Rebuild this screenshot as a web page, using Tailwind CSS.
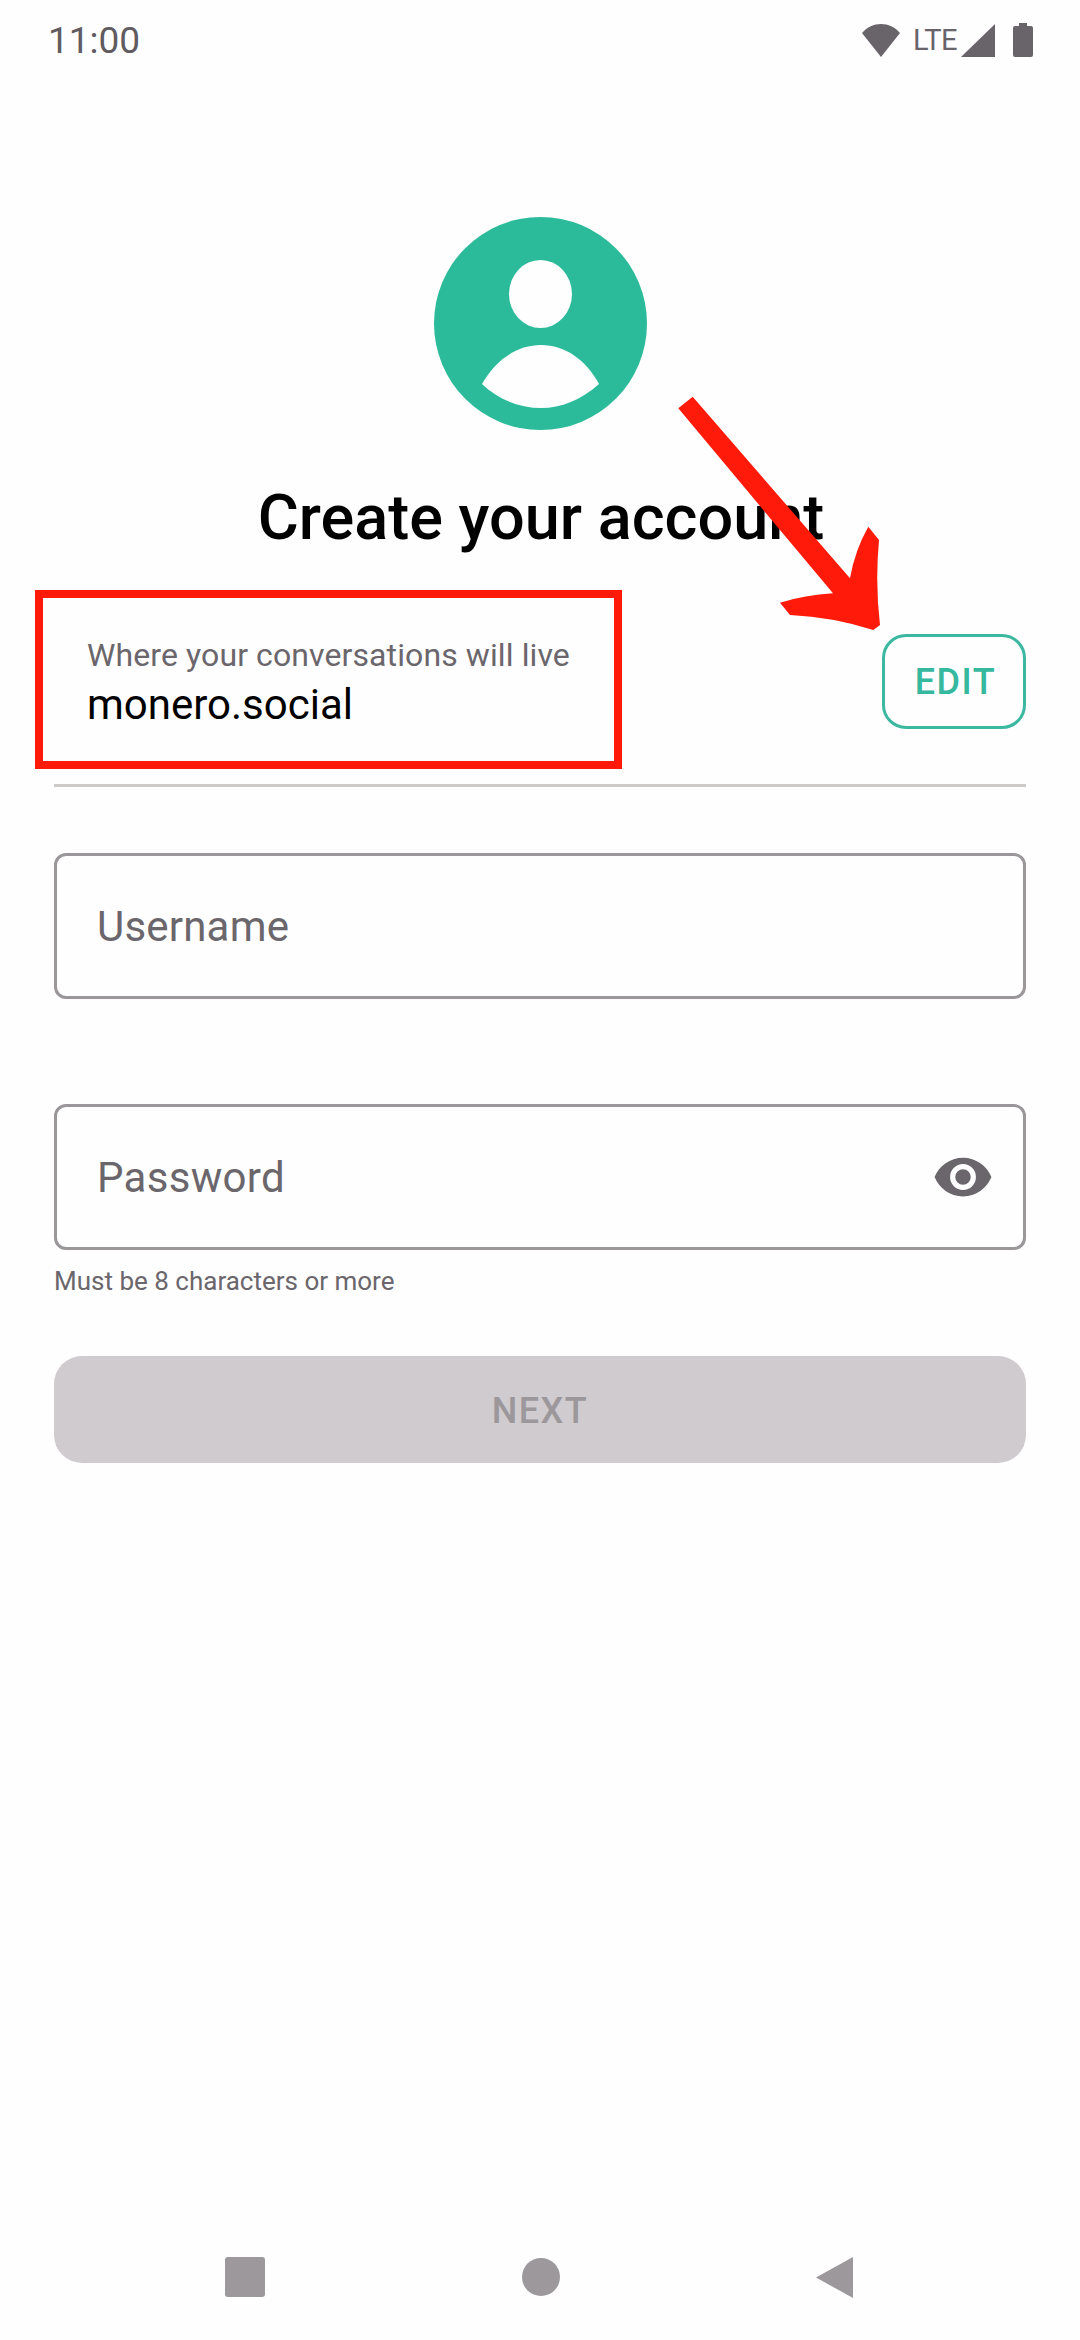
<!DOCTYPE html>
<html lang="en">
<head>
  <meta charset="UTF-8">
  <meta name="viewport" content="width=device-width, initial-scale=1.0">
  <title>Create your account</title>
  <script src="https://cdn.jsdelivr.net/npm/@tailwindcss/browser@4"></script>
</head>
<body class="bg-[#fefefe] font-[Roboto,sans-serif]">
<div class="relative w-[1080px] h-[2340px] overflow-hidden flex flex-col">

  <!-- status bar -->
  <div class="h-[80px] flex items-center justify-between pl-[48px] pr-[47px]">
    <span class="text-[37px] leading-none text-[#5f5b60]">11:00</span>
    <div class="flex items-center text-[#68646a]">
      <svg class="w-[38px] h-[33px]" viewBox="0 0 38 33" fill="currentColor"><path d="M19 33 L0 9 C5 3 12 0 19 0 C26 0 33 3 38 9 Z"/></svg>
      <span class="ml-[13px] text-[29px] leading-none tracking-[-0.5px]">LTE</span>
      <svg class="ml-[4px] w-[34px] h-[33px]" viewBox="0 0 34 33" fill="currentColor"><path d="M34 0 V33 H0 Z"/></svg>
      <svg class="ml-[18px] w-[20px] h-[34px]" viewBox="0 0 20 34" fill="currentColor"><path d="M6 0 H14 V3 H18 Q20 3 20 5 V32 Q20 34 18 34 H2 Q0 34 0 32 V5 Q0 3 2 3 H6 Z"/></svg>
    </div>
  </div>

  <!-- avatar -->
  <div class="mt-[137px] flex justify-center">
    <svg class="w-[213px] h-[213px]" viewBox="0 0 213 213">
      <circle cx="106.5" cy="106.5" r="106.5" fill="#2bbb9b"/>
      <ellipse cx="106.5" cy="77" rx="31.5" ry="34" fill="#fefefe"/>
      <path d="M48 167 C62 142 84 128 107 128 C131 128 152 143 165 167 C147 183 127 191 107 191 C86 191 65 183 48 167 Z" fill="#fefefe"/>
    </svg>
  </div>

  <h1 class="mt-[50px] pl-[2px] text-center text-[63px] leading-[76px] font-medium text-black">Create your account</h1>

  <!-- server row -->
  <div class="mt-[70px] px-[54px] flex items-start justify-between">
    <div class="pl-[33px] pt-[8px]">
      <p class="text-[32px] leading-[42px] tracking-[0.1px] text-[#6a666c]">Where your conversations will live</p>
      <p class="mt-[2px] text-[42px] leading-[54px] text-black">monero.social</p>
    </div>
    <button class="mt-[8px] w-[144px] h-[95px] pl-[3px] rounded-[24px] border-[3px] border-[#3cb8a0] text-[36px] font-medium tracking-[1.5px] text-[#35b89e]">EDIT</button>
  </div>
  <div class="mx-[54px] mt-[52px] h-[3px] bg-[#cdcaca]"></div>

  <!-- fields -->
  <div class="mx-[54px] mt-[66px] h-[146px] rounded-[12px] border-[3px] border-[#9a969a] flex items-center pl-[40px]">
    <span class="text-[42px] tracking-[0.2px] text-[#6a666c]">Username</span>
  </div>
  <div class="mx-[54px] mt-[105px] h-[146px] rounded-[12px] border-[3px] border-[#9a969a] flex items-center justify-between pl-[40px] pr-[29px]">
    <span class="text-[42px] tracking-[0.3px] text-[#6a666c]">Password</span>
    <svg class="w-[62px] h-[62px]" viewBox="0 0 24 24" fill="#6a666c"><path d="M12 4.5C7 4.5 2.73 7.61 1 12c1.73 4.39 6 7.5 11 7.5s9.27-3.11 11-7.5c-1.73-4.39-6-7.5-11-7.5zM12 17a5 5 0 1 1 0-10 5 5 0 0 1 0 10zm0-8a3 3 0 1 0 0 6 3 3 0 0 0 0-6z"/></svg>
  </div>
  <p class="mx-[54px] mt-[15px] text-[26px] leading-[32px] text-[#6a666c]">Must be 8 characters or more</p>

  <button class="mx-[54px] mt-[59px] h-[107px] pt-[2px] rounded-[28px] bg-[#cfcbcf] text-[36px] font-medium tracking-[1.5px] text-[#9b979b]">NEXT</button>

  <!-- nav bar -->
  <div class="mt-auto mb-[43px] h-[40px] pl-[225px] pr-[227px] flex items-center justify-between">
    <div class="w-[40px] h-[40px] rounded-[3px] bg-[#9c989c]"></div>
    <div class="w-[38px] h-[38px] rounded-full bg-[#9c989c]"></div>
    <svg class="w-[37px] h-[41px]" viewBox="0 0 37 41" fill="#9c989c"><path d="M37 0 V41 L0 20.5 Z"/></svg>
  </div>

  <!-- annotations drawn over the screenshot -->
  <div class="absolute left-[35px] top-[590px] w-[587px] h-[179px] border-[8px] border-[#ff1a0a]"></div>
  <svg class="absolute left-0 top-0 w-[1080px] h-[800px]" viewBox="0 0 1080 800" fill="#ff1a0a">
    <path d="M678.3 408.3 L692.7 396.7 L850 578.3 Q855 550 868.3 526.7 L879 540 Q875 583 880 625 L873.3 630 Q833 617 790 615 L780 602.7 Q805 595 833 593.3 Z"/>
  </svg>
</div>
</body>
</html>
